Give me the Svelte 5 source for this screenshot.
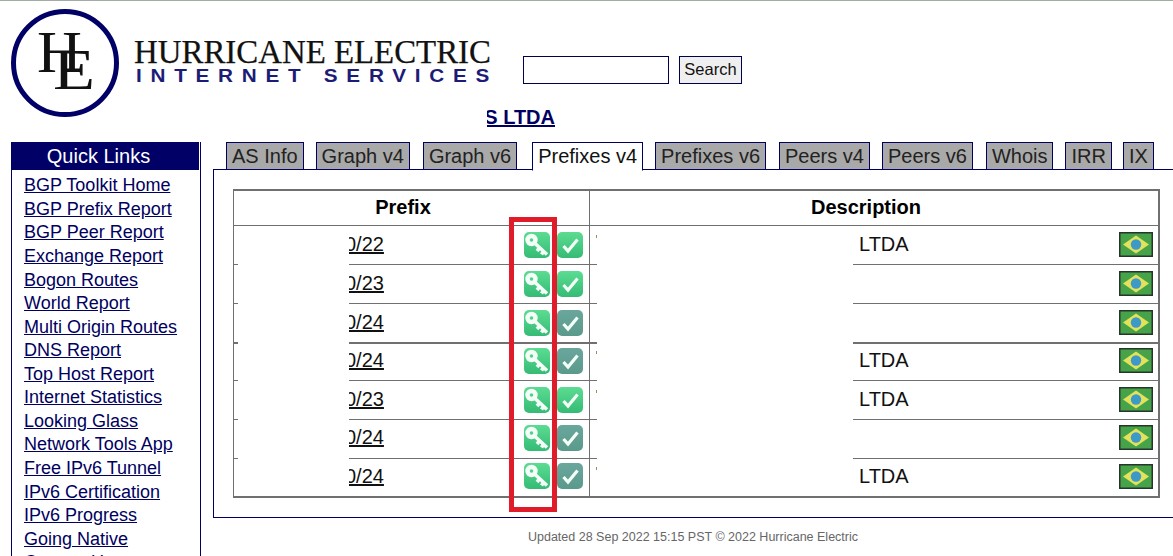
<script>
  const links = [
    'BGP Toolkit Home', 'BGP Prefix Report', 'BGP Peer Report', 'Exchange Report',
    'Bogon Routes', 'World Report', 'Multi Origin Routes', 'DNS Report',
    'Top Host Report', 'Internet Statistics', 'Looking Glass', 'Network Tools App',
    'Free IPv6 Tunnel', 'IPv6 Certification', 'IPv6 Progress', 'Going Native', 'Contact Us'
  ];

  // gap = space before the tab
  const tabs = [
    { name: 'AS Info', gap: 0 },
    { name: 'Graph v4', gap: 12 },
    { name: 'Graph v6', gap: 13 },
    { name: 'Prefixes v4', gap: 15, active: true },
    { name: 'Prefixes v6', gap: 12 },
    { name: 'Peers v4', gap: 13 },
    { name: 'Peers v6', gap: 12 },
    { name: 'Whois', gap: 13 },
    { name: 'IRR', gap: 12 },
    { name: 'IX', gap: 11 }
  ];

  const rows = [
    { prefix: '0/22', ok: true, desc: 'LTDA' },
    { prefix: '0/23', ok: true, desc: '' },
    { prefix: '0/24', ok: false, desc: '' },
    { prefix: '0/24', ok: false, desc: 'LTDA' },
    { prefix: '0/23', ok: true, desc: 'LTDA' },
    { prefix: '0/24', ok: false, desc: '' },
    { prefix: '0/24', ok: false, desc: 'LTDA' }
  ];
</script>

<div class="page">
  <header>
    <svg class="logo" width="480" height="110" viewBox="0 0 480 110">
      <circle cx="54" cy="54" r="51.5" fill="none" stroke="#000066" stroke-width="5" />
      <text class="he" x="26" y="63" font-size="59" textLength="45" lengthAdjust="spacingAndGlyphs">H</text>
      <text class="he" x="42" y="80" font-size="56" textLength="42" lengthAdjust="spacingAndGlyphs">E</text>
      <text class="he name" x="123" y="53.5" font-size="33" textLength="357" lengthAdjust="spacingAndGlyphs">HURRICANE ELECTRIC</text>
      <text class="sub" x="125" y="73" font-size="19" textLength="362" lengthAdjust="spacingAndGlyphs">INTERNET SERVICES</text>
    </svg>
    <form class="search" on:submit|preventDefault>
      <input type="text" />
      <button type="submit">Search</button>
    </form>
  </header>

  <h1><a href="#top"><span class="cut">S LTDA</span></a></h1>

  <div class="body">
    <nav>
      <div class="nav-title">Quick Links</div>
      <ul>
        {#each links as link}
          <li><a href="#top">{link}</a></li>
        {/each}
      </ul>
    </nav>

    <main>
      <div class="tabs">
        {#each tabs as tab}
          <div class="tab" class:active={tab.active} style="margin-left: {tab.gap}px">{tab.name}</div>
        {/each}
      </div>

      <div class="panel">
        <div class="table-wrap">
          <table>
            <thead>
              <tr>
                <th class="col-prefix"><span class="th-prefix">Prefix</span></th>
                <th><span class="th-desc">Description</span></th>
              </tr>
            </thead>
            <tbody>
              {#each rows as row}
                <tr>
                  <td class="col-prefix">
                    <div class="prefix-cell">
                      <a href="#top">{row.prefix}</a>
                      <svg class="icon" width="26" height="26" viewBox="0 0 26 26">
                        <rect width="26" height="26" rx="5" fill="url(#green)" />
                        <circle cx="7.5" cy="8" r="4" fill="none" stroke="#f4fff8" stroke-width="4.4" />
                        <path d="M10.5 11 L23 22.5 M15.5 16 L13 19 M19.5 19.5 L17.5 22.5" fill="none" stroke="#f4fff8" stroke-width="3.6" />
                      </svg>
                      <svg class="icon" width="26" height="26" viewBox="0 0 26 26">
                        <rect width="26" height="26" rx="5" fill={row.ok ? 'url(#green)' : 'url(#teal)'} />
                        <path d="M6.5 14 L11 19 L20.5 7.5" fill="none" stroke="#f4fff8" stroke-width="3.2" />
                      </svg>
                    </div>
                  </td>
                  <td>
                    <div class="desc-cell">
                      {#if row.desc}<i class="tick"></i>{/if}
                      <span class="desc">{row.desc}</span>
                      <svg class="flag" width="34" height="25" viewBox="0 0 34 25">
                        <rect width="34" height="25" fill="#26352a" />
                        <rect x="1.5" y="1.5" width="31" height="22" fill="#46a34a" />
                        <path d="M4 12.5 L17 3.5 L30 12.5 L17 21.5 Z" fill="#e3e25a" />
                        <circle cx="17" cy="12.5" r="5.2" fill="#3d9ac8" />
                      </svg>
                    </div>
                  </td>
                </tr>
              {/each}
            </tbody>
          </table>
          <div class="mask mask-prefix"></div>
          <div class="mask mask-desc"></div>
          <div class="marker"></div>
        </div>
      </div>

      <footer>Updated 28 Sep 2022 15:15 PST © 2022 Hurricane Electric</footer>
    </main>
  </div>

  <svg width="0" height="0" class="defs">
    <defs>
      <linearGradient id="green" x1="0" y1="0" x2="0" y2="1">
        <stop offset="0" stop-color="#5cdc92" />
        <stop offset="1" stop-color="#35bb75" />
      </linearGradient>
      <linearGradient id="teal" x1="0" y1="0" x2="0" y2="1">
        <stop offset="0" stop-color="#6aa69c" />
        <stop offset="1" stop-color="#5a9a8c" />
      </linearGradient>
    </defs>
  </svg>
</div>

<style>
  :global(body) {
    margin: 0;
    background: #fff;
  }

  .page {
    height: 556px;
    overflow: hidden;
    border-top: 1px solid #a3aca3;
    box-sizing: border-box;
    font-family: 'Liberation Sans', Arial, sans-serif;
    color: #000;
    position: relative;
  }

  header {
    display: flex;
    align-items: flex-start;
    height: 104px;
    padding: 8px 0 0 11px;
    box-sizing: border-box;
  }

  .logo {
    flex: none;
    display: block;
  }

  .he {
    font-family: 'Liberation Serif', serif;
    fill: #111;
  }

  .name {
    stroke: #111;
    stroke-width: 0.25;
  }

  .sub {
    font-family: 'Liberation Sans', sans-serif;
    font-weight: bold;
    letter-spacing: 8px;
    fill: #1c1c78;
  }

  .search {
    display: flex;
    gap: 10px;
    margin: 47px 0 0 32px;
  }

  input {
    width: 146px;
    height: 28px;
    box-sizing: border-box;
    border: 1px solid #000050;
    padding: 0 4px;
    background: #fff;
  }

  button {
    height: 28px;
    width: 63px;
    box-sizing: border-box;
    border: 1px solid #000050;
    padding: 0 0 2px;
    background: #efefef;
    font-family: inherit;
    font-size: 16.5px;
    color: #111;
  }

  h1 {
    margin: 0;
    padding-left: 487px;
    font-size: 20px;
    line-height: 24px;
    height: 37px;
    font-weight: bold;
  }

  h1 a {
    color: #000060;
  }

  .cut {
    display: inline-block;
    width: 68px;
    overflow: hidden;
    text-decoration: underline;
    direction: rtl;
    white-space: nowrap;
  }

  .body {
    display: flex;
    align-items: flex-start;
  }

  nav {
    flex: none;
    width: 190px;
    margin-left: 11px;
    box-sizing: border-box;
    border-left: 1px solid #000060;
    border-right: 1px solid #000060;
  }

  .nav-title {
    background: #000066;
    color: #fff;
    text-align: center;
    font-size: 20px;
    line-height: 28px;
    margin-right: 1px;
    padding-right: 14px;
  }

  ul {
    list-style: none;
    margin: 4.4px 0 0;
    padding: 0 0 0 12px;
  }

  li {
    font-size: 18px;
    line-height: 23.55px;
    white-space: nowrap;
  }

  li a {
    color: #000060;
  }

  main {
    flex: 1;
    min-width: 0;
    margin-left: 12px;
  }

  .tabs {
    display: flex;
    padding-left: 13px;
    position: relative;
    z-index: 1;
    white-space: nowrap;
  }

  .tab {
    flex: none;
    height: 28px;
    box-sizing: border-box;
    border: 1px solid #000060;
    background: #a9a9a9;
    padding: 0 5px;
    font-size: 20px;
    line-height: 26px;
    color: #222;
  }

  .tab.active {
    background: #fff;
    border-bottom-color: #fff;
    color: #111;
    height: 29px;
  }

  .panel {
    height: 349px;
    margin-top: -2px;
    box-sizing: border-box;
    border: 1px solid #000060;
    border-right: 0;
    padding: 19px 13px 0 19px;
  }

  .table-wrap {
    position: relative;
  }

  table {
    width: 100%;
    border-collapse: separate;
    border-spacing: 0;
    table-layout: fixed;
    border: 1px solid #707070;
    border-top-width: 2px;
    border-right-width: 2px;
    border-bottom-width: 2px;
  }

  th {
    height: 34px;
    padding: 0 0 2px;
    box-sizing: content-box;
    font-size: 20px;
    line-height: 24px;
    text-align: center;
    border-bottom: 1px solid #707070;
  }

  thead th {
    height: 32px;
  }

  .th-prefix {
    margin-right: 17px;
  }

  .th-desc {
    margin-right: 16px;
  }

  td {
    height: 38px;
    padding: 0;
    border-bottom: 1px solid #707070;
    font-size: 20px;
  }

  tbody tr:nth-child(3) td {
    border-bottom-width: 2px;
  }

  tbody tr:nth-child(4) td {
    height: 36px;
  }

  tbody tr:last-child td {
    height: 37px;
    border-bottom: 0;
  }

  .col-prefix {
    width: 355px;
    border-right: 1px solid #707070;
    box-sizing: content-box;
  }

  .prefix-cell,
  .desc-cell {
    display: flex;
    align-items: center;
    margin-top: -1px;
  }

  tbody tr:nth-child(4) .prefix-cell,
  tbody tr:nth-child(6) .prefix-cell,
  tbody tr:nth-child(7) .prefix-cell,
  tbody tr:nth-child(4) .desc-cell,
  tbody tr:nth-child(6) .desc-cell,
  tbody tr:nth-child(7) .desc-cell {
    margin-top: -3px;
  }

  .prefix-cell {
    padding-left: 111px;
    gap: 7px;
  }

  .prefix-cell a {
    color: #111;
    margin-right: auto;
  }

  .icon:last-child {
    margin-right: 6px;
  }

  .desc-cell {
    padding-right: 5px;
    position: relative;
  }

  .tick {
    position: absolute;
    left: 6px;
    top: 3px;
    width: 1px;
    height: 3px;
    background: #a08a60;
  }

  .desc {
    margin-left: 269px;
    margin-right: auto;
    color: #111;
  }

  .flag {
    flex: none;
    display: block;
  }

  .mask {
    position: absolute;
    top: 38px;
    bottom: 2px;
    background: #fff;
  }

  .mask-prefix {
    left: 5px;
    width: 111px;
  }

  .mask-desc {
    left: 364px;
    width: 256px;
  }

  .marker {
    position: absolute;
    left: 276px;
    top: 28px;
    width: 48px;
    height: 295px;
    box-sizing: border-box;
    border: 5px solid #e01b2a;
  }

  footer {
    margin-top: 12px;
    text-align: center;
    font-size: 12.5px;
    color: #666;
  }

  .defs {
    position: absolute;
  }
</style>
